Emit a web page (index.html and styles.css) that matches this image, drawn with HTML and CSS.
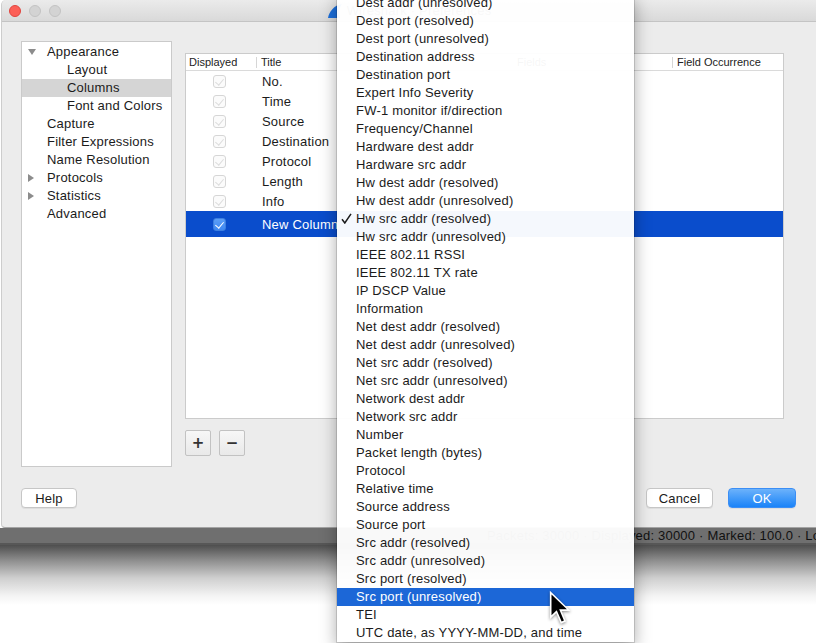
FILE: index.html
```html
<!DOCTYPE html>
<html>
<head>
<meta charset="utf-8">
<title>Wireshark · Preferences</title>
<link rel="stylesheet" href="styles.css">
</head>
<body>
<div class="screen">
  <div class="window">
    <div class="titlebar">
      <div class="lights"><span class="light red"></span><span class="light"></span><span class="light"></span></div>
      <div class="title">
        <svg class="appicon" viewBox="0 0 16 16" width="16" height="16"><path d="M1 15 C2 9 7 2 15 1 C12 5 11.5 10 13 15 Z" fill="#1b6fdc"/></svg>
        <span>Wireshark · Preferences</span>
      </div>
      <div></div>
    </div>
    <div class="body">
      <div class="main">
        <ul class="tree">
          <li class="item"><span class="twisty"><svg viewBox="0 0 8 6" width="8" height="6"><path d="M0 0 H8 L4 6 Z" fill="#8c8c8c"/></svg></span>Appearance</li>
          <li class="item child">Layout</li>
          <li class="item child active">Columns</li>
          <li class="item child">Font and Colors</li>
          <li class="item"><span class="twisty"></span>Capture</li>
          <li class="item"><span class="twisty"></span>Filter Expressions</li>
          <li class="item"><span class="twisty"></span>Name Resolution</li>
          <li class="item"><span class="twisty"><svg viewBox="0 0 6 8" width="6" height="8"><path d="M0 0 V8 L6 4 Z" fill="#8c8c8c"/></svg></span>Protocols</li>
          <li class="item"><span class="twisty"><svg viewBox="0 0 6 8" width="6" height="8"><path d="M0 0 V8 L6 4 Z" fill="#8c8c8c"/></svg></span>Statistics</li>
          <li class="item"><span class="twisty"></span>Advanced</li>
        </ul>
        <div class="pane">
          <div class="table">
            <div class="thead">
              <div class="th">Displayed</div>
              <div class="th">Title</div>
              <div class="th"></div>
              <div class="th">Fields</div>
              <div class="th">Field Occurrence</div>
            </div>
            <div class="row"><div class="cb-cell"><span class="cb"></span></div><div class="td">No.</div><div class="td"></div><div class="td"></div><div class="td"></div></div>
            <div class="row"><div class="cb-cell"><span class="cb"></span></div><div class="td">Time</div><div class="td"></div><div class="td"></div><div class="td"></div></div>
            <div class="row"><div class="cb-cell"><span class="cb"></span></div><div class="td">Source</div><div class="td"></div><div class="td"></div><div class="td"></div></div>
            <div class="row"><div class="cb-cell"><span class="cb"></span></div><div class="td">Destination</div><div class="td"></div><div class="td"></div><div class="td"></div></div>
            <div class="row"><div class="cb-cell"><span class="cb"></span></div><div class="td">Protocol</div><div class="td"></div><div class="td"></div><div class="td"></div></div>
            <div class="row"><div class="cb-cell"><span class="cb"></span></div><div class="td">Length</div><div class="td"></div><div class="td"></div><div class="td"></div></div>
            <div class="row"><div class="cb-cell"><span class="cb"></span></div><div class="td">Info</div><div class="td"></div><div class="td"></div><div class="td"></div></div>
            <div class="row sel"><div class="cb-cell"><span class="cb on"></span></div><div class="td">New Column</div><div class="td"></div><div class="td"></div><div class="td"></div></div>
          </div>
          <div class="tools">
            <button class="sq">+</button>
            <button class="sq">−</button>
          </div>
        </div>
      </div>
      <div class="footer">
        <button class="btn">Help</button>
        <span class="spacer"></span>
        <button class="btn">Cancel</button>
        <button class="btn ok">OK</button>
      </div>
    </div>
  </div>
  <div class="status">Packets: 30000 · Displayed: 30000 · Marked: 100.0 · Load time: 0:00.412</div>
  <div class="status-edge"></div>
  <div class="shadow"></div>

  <ul class="menu">
    <li>Dest addr (unresolved)</li>
    <li>Dest port (resolved)</li>
    <li>Dest port (unresolved)</li>
    <li>Destination address</li>
    <li>Destination port</li>
    <li>Expert Info Severity</li>
    <li>FW-1 monitor if/direction</li>
    <li>Frequency/Channel</li>
    <li>Hardware dest addr</li>
    <li>Hardware src addr</li>
    <li>Hw dest addr (resolved)</li>
    <li>Hw dest addr (unresolved)</li>
    <li class="checked"><svg class="check" viewBox="0 0 11 11" width="11" height="11"><path d="M1 6.2 L3.8 10 L10 0.8" fill="none" stroke="#1b1b1b" stroke-width="1.5"/></svg>Hw src addr (resolved)</li>
    <li>Hw src addr (unresolved)</li>
    <li>IEEE 802.11 RSSI</li>
    <li>IEEE 802.11 TX rate</li>
    <li>IP DSCP Value</li>
    <li>Information</li>
    <li>Net dest addr (resolved)</li>
    <li>Net dest addr (unresolved)</li>
    <li>Net src addr (resolved)</li>
    <li>Net src addr (unresolved)</li>
    <li>Network dest addr</li>
    <li>Network src addr</li>
    <li>Number</li>
    <li>Packet length (bytes)</li>
    <li>Protocol</li>
    <li>Relative time</li>
    <li>Source address</li>
    <li>Source port</li>
    <li>Src addr (resolved)</li>
    <li>Src addr (unresolved)</li>
    <li>Src port (resolved)</li>
    <li class="hl">Src port (unresolved)</li>
    <li>TEI</li>
    <li>UTC date, as YYYY-MM-DD, and time</li>
  </ul>

  <svg class="cursor" viewBox="0 0 14 22" width="23" height="36">
    <path d="M0.5 0.5 L0.5 17.8 L4.4 14 L7.2 20.6 L10.4 19.3 L7.7 12.8 L13.2 12.8 Z" fill="#fff"/>
    <path d="M1.5 2.8 L1.5 15.4 L4.7 12.3 L7.7 19.2 L9.1 18.6 L6.2 11.7 L10.9 11.7 Z" fill="#000"/>
  </svg>
</div>
</body>
</html>
```
FILE: styles.css
```css
* { box-sizing: border-box; margin: 0; padding: 0; }

body {
  width: 816px;
  height: 643px;
  overflow: hidden;
  background: #fff;
  font-family: "Liberation Sans", Arial, sans-serif;
  font-size: 13px;
  letter-spacing: 0.2px;
  color: #1b1b1b;
}

.screen {
  position: relative;
  width: 816px;
  height: 643px;
  overflow: hidden;
  background: #fff;
}

/* ---------- window ---------- */
.window {
  margin-left: 1px;
  width: 815px;
  height: 528px;
  background: #ececec;
  border-left: 1px solid #cdcdcd;
  border-bottom: 1px solid #a4a4a4;
  border-radius: 5px 0 0 4px;
  display: flex;
  flex-direction: column;
}

.titlebar {
  height: 22px;
  border-bottom: 1px solid #c4c4c4;
  background: linear-gradient(#ebebeb, #d9d9d9);
  border-radius: 5px 0 0 0;
  display: grid;
  grid-template-columns: 1fr auto 1fr;
  align-items: center;
}

.lights { display: flex; gap: 8px; padding-left: 7px; }
.light {
  width: 12px;
  height: 12px;
  border-radius: 50%;
  background: #d3d3d3;
  border: 1px solid #c3c3c3;
}
.light.red { background: #fc5f57; border-color: #e0453f; }

.title {
  display: flex;
  align-items: center;
  gap: 4px;
  color: #4a4a4a;
  font-size: 13px;
}
.appicon { display: block; }

.body {
  flex: 1;
  display: flex;
  flex-direction: column;
  padding: 19px 20px 19px 19px;
}

.main {
  display: flex;
  gap: 13px;
  height: 426px;
  padding-right: 12px;
}

/* ---------- tree ---------- */
.tree {
  width: 151px;
  flex: none;
  background: #fff;
  border: 1px solid #cacaca;
  list-style: none;
  padding-top: 1px;
}
.item {
  display: flex;
  align-items: center;
  height: 18px;
  line-height: 18px;
  white-space: nowrap;
}
.item.child { padding-left: 45px; }
.item.active { background: #d5d5d5; }
.twisty {
  width: 25px;
  flex: none;
  display: flex;
  align-items: center;
  padding-left: 6px;
}
.twisty svg { display: block; }

/* ---------- table ---------- */
.pane {
  flex: 1;
  display: flex;
  flex-direction: column;
  padding-top: 12px;
}
.table {
  height: 366px;
  background: #fff;
  border: 1px solid #cbcbcb;
}
.thead, .row {
  display: grid;
  grid-template-columns: 70px 96px 160px 160px 1fr;
}
.thead {
  height: 17px;
  border-bottom: 1px solid #dadada;
}
.th {
  font-size: 11px;
  letter-spacing: 0;
  line-height: 16px;
  padding-left: 5px;
  color: #222;
  white-space: nowrap;
}
.th:first-child { padding-left: 3px; }
.th:nth-child(2), .th:nth-child(5) {
  background: linear-gradient(#d6d6d6, #d6d6d6) left center / 1px 11px no-repeat;
}

.row { height: 20px; }
.row.sel { height: 26px; background: #0a4dcc; color: #fff; }
.td {
  display: flex;
  align-items: center;
  padding-left: 6px;
  white-space: nowrap;
  overflow: hidden;
}
.cb-cell {
  display: flex;
  align-items: center;
  padding-left: 27px;
}
.cb {
  width: 13px;
  height: 13px;
  border: 1px solid #d6d6d6;
  border-radius: 3px;
  background: #fbfbfb;
  position: relative;
}
.cb::after {
  content: "";
  position: absolute;
  left: 3px;
  top: 1px;
  width: 4px;
  height: 7px;
  border-right: 1.2px solid #dcdcdc;
  border-bottom: 1.2px solid #dcdcdc;
  transform: rotate(40deg);
}
.cb.on {
  background: linear-gradient(#5c9ef6, #3e88f3);
  border-color: #3d7fe0;
}
.cb.on::after { border-color: #fff; border-width: 0 1.8px 1.8px 0; }

.tools {
  display: flex;
  gap: 8px;
  margin-top: 11px;
}
.sq {
  width: 26px;
  height: 26px;
  border: 1px solid #c2c2c2;
  border-radius: 2px;
  background: linear-gradient(#f7f7f7, #e9e9e9);
  font-family: "DejaVu Sans", sans-serif;
  font-size: 15px;
  font-weight: bold;
  color: #333;
  line-height: 22px;
}

/* ---------- footer ---------- */
.footer {
  display: flex;
  gap: 15px;
  margin-top: 21px;
  height: 20px;
}
.spacer { flex: 1; }
.btn {
  height: 20px;
  width: 56px;
  border: 1px solid #c6c6c6;
  border-radius: 4px;
  background: #fff;
  box-shadow: 0 1px 0 rgba(0,0,0,0.06);
  font-family: "Liberation Sans", Arial, sans-serif;
  font-size: 13px;
  letter-spacing: 0.2px;
  color: #1b1b1b;
}
.footer .btn:nth-child(3) { width: 67px; }
.btn.ok {
  width: 68px;
  border-color: #3b8ef5;
  background: linear-gradient(#6cb2fb, #1a83f8);
  color: #fff;
}

/* ---------- behind ---------- */
.status {
  height: 15px;
  background: #6f6f6f;
  color: #111;
  line-height: 15px;
  padding-left: 487px;
  white-space: nowrap;
  overflow: hidden;
}
.status-edge { height: 2px; background: #575757; }
.shadow {
  height: 60px;
  background: linear-gradient(#4e4e4e, #8c8c8c 25%, #cfcfcf 55%, #f4f4f4 85%, #fff);
}

/* ---------- popup menu ---------- */
.menu {
  position: absolute;
  left: 337px;
  top: -6px;
  width: 297px;
  list-style: none;
  background: rgba(255,255,255,0.96);
  box-shadow: 0 0 0 1px rgba(0,0,0,0.13), 0 6px 16px rgba(0,0,0,0.35);
}
.menu li {
  position: relative;
  height: 18px;
  line-height: 18px;
  padding-left: 19px;
  white-space: nowrap;
  color: #1b1b1b;
}
.menu li.hl { background: #1c67d7; color: #fff; }
.check {
  position: absolute;
  left: 4px;
  top: 3px;
}

.cursor {
  position: absolute;
  left: 549px;
  top: 590px;
  filter: drop-shadow(0 1px 1.5px rgba(0,0,0,0.45));
}
```
